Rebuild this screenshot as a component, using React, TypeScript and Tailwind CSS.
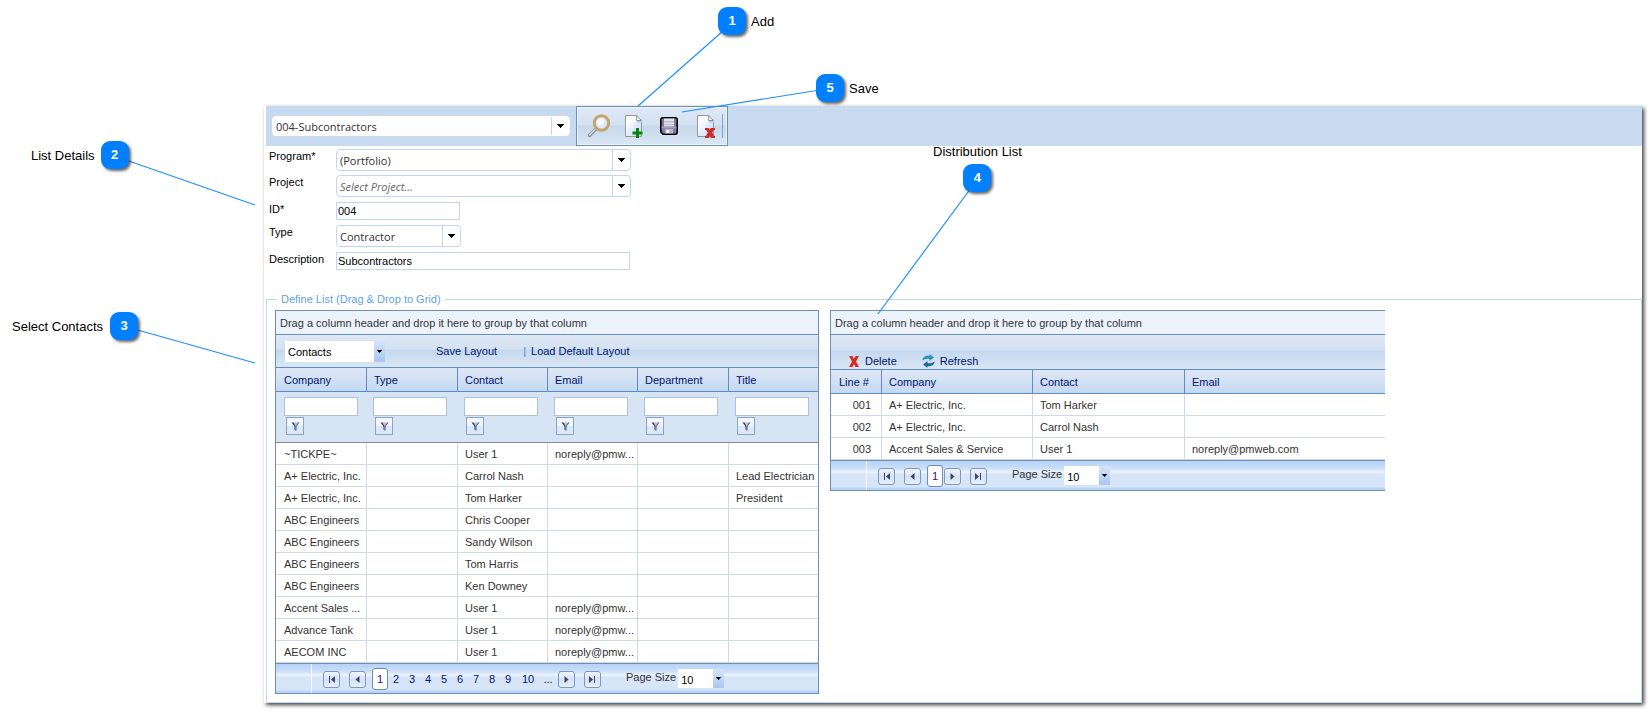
import { useState, type ReactNode } from 'react'

// A contact row in the left grid
interface Contact {
  company: string;
  contact: string;
  email?: string;
  title?: string;
}

interface ListLine {
  line: string;
  company: string;
  contact: string;
  email?: string;
}

interface Callout {
  no: number;
  label: string;
  place: string;
  line: [number, number, number, number];
}

const contacts: Contact[] = [
  { company: '~TICKPE~', contact: 'User 1', email: 'noreply@pmw...' },
  { company: 'A+ Electric, Inc.', contact: 'Carrol Nash', title: 'Lead Electrician' },
  { company: 'A+ Electric, Inc.', contact: 'Tom Harker', title: 'President' },
  { company: 'ABC Engineers', contact: 'Chris Cooper' },
  { company: 'ABC Engineers', contact: 'Sandy Wilson' },
  { company: 'ABC Engineers', contact: 'Tom Harris' },
  { company: 'ABC Engineers', contact: 'Ken Downey' },
  { company: 'Accent Sales ...', contact: 'User 1', email: 'noreply@pmw...' },
  { company: 'Advance Tank', contact: 'User 1', email: 'noreply@pmw...' },
  { company: 'AECOM INC', contact: 'User 1', email: 'noreply@pmw...' },
]

const listLines: ListLine[] = [
  { line: '001', company: 'A+ Electric, Inc.', contact: 'Tom Harker' },
  { line: '002', company: 'A+ Electric, Inc.', contact: 'Carrol Nash' },
  { line: '003', company: 'Accent Sales & Service', contact: 'User 1', email: 'noreply@pmweb.com' },
]

const callouts: Callout[] = [
  { no: 1, label: 'Add', place: 'left-[718px] top-[7px] flex-row gap-[5px]', line: [723, 31, 638, 106] },
  { no: 5, label: 'Save', place: 'left-[816px] top-[74px] flex-row gap-[5px]', line: [820, 90, 682, 112] },
  { no: 2, label: 'List Details', place: 'left-[31px] top-[141px] flex-row-reverse gap-1.5', line: [126, 160, 255, 205] },
  { no: 3, label: 'Select Contacts', place: 'left-[12px] top-[312px] flex-row-reverse gap-[7px]', line: [134, 329, 255, 363] },
  { no: 4, label: 'Distribution List', place: 'left-[933px] top-[144px] flex-col-reverse gap-[5px]', line: [971, 188, 878, 314] },
]

const columns = ['Company', 'Type', 'Contact', 'Email', 'Department', 'Title']

const barGradient = 'bg-[linear-gradient(#dfe8f5_0%,#d3e1f1_45%,#c3d8ef_46%,#dae6f4_100%)]'
const headGradient = 'bg-linear-to-b from-[#dfe8f5] to-[#c3d8f1]'
const pagerGradient =
  'bg-[linear-gradient(#b8d3f6_0%,#c9def8_25%,#edf4fd_38%,#d7e5f8_46%,#d7e5f8_90%,#b8d3f6_94%)]'
const headCell = 'h-6 pl-[7px] first:pl-2 text-left font-normal text-[#00156e] border-b border-[#5d8cc9]'
const cell = 'h-[22px] pl-[7px] first:pl-2 whitespace-nowrap border-b border-[#d0d7e5]'

const Caret = () => (
  <svg width="7" height="4" viewBox="0 0 7 4" shapeRendering="crispEdges" aria-hidden="true">
    <path d="M0 0h7v1H6v1H5v1H4v1H3V3H2V2H1V1H0z" fill="#000" />
  </svg>
)

// Rounded combo box with a separate arrow cell
const Combo = ({ id, label, options, className, italic }: {
  id: string; label?: string; options: string[]; className: string; italic?: boolean
}) => (
  <div className={`relative rounded-sm border bg-white ${className}`}>
    <select
      id={id}
      aria-label={label}
      className={`block h-full w-full appearance-none pl-[3px] pr-5 pt-0.5 font-['Open_Sans',sans-serif] text-[11px] outline-none ${italic ? 'italic text-[#666]' : 'text-[#333]'}`}
    >
      {options.map(o => <option key={o}>{o}</option>)}
    </select>
    <span className="pointer-events-none absolute inset-y-0 right-0 flex w-[18px] items-center justify-center border-l border-[#bfd6f6] pr-px">
      <Caret />
    </span>
  </div>
)

// Square drop-down used in the grid bars
const MiniSelect = ({ id, label, options, className }: {
  id: string; label?: string; options: string[]; className: string
}) => (
  <div className={`relative bg-white ${className}`}>
    <select id={id} aria-label={label} className="block h-full w-full appearance-none pl-[3px] pt-0.5 text-[11px] text-black outline-none">
      {options.map(o => <option key={o}>{o}</option>)}
    </select>
    <span className="pointer-events-none absolute inset-y-0 right-0 flex w-[11px] items-center justify-center bg-linear-to-b from-[#d3e4fb] to-[#a9c7f1]">
      <svg width="5" height="3" viewBox="0 0 5 3" shapeRendering="crispEdges" aria-hidden="true">
        <path d="M0 0h5v1H4v1H3v1H2V2H1V1H0z" fill="#000" />
      </svg>
    </span>
  </div>
)

const Page = ({ children }: { children: ReactNode }) => (
  <svg width="20" height="24" viewBox="0 0 20 24" aria-hidden="true">
    <defs>
      <linearGradient id="sheet" x1="0" y1="0" x2="1" y2="1">
        <stop offset="0.2" stopColor="#fff" />
        <stop offset="1" stopColor="#bcd3fa" />
      </linearGradient>
    </defs>
    <path d="M1.500 1.500h11l5 5v16h-16z" fill="url(#sheet)" stroke="#989898" />
    <path d="M13 5.500h5v3h-5z" fill="#a9c6f5" />
    <path d="M12.500 1.500v5h5z" fill="#fffdf0" stroke="#989898" />
    {children}
  </svg>
)

const SearchIcon = () => (
  <svg width="24" height="24" viewBox="0 0 24 24" aria-hidden="true">
    <path d="M2.500 21.500l7-7" stroke="#8b93a0" strokeWidth="3.500" strokeLinecap="round" />
    <path d="M2.500 21l6.500-6.500" stroke="#d5dae2" strokeWidth="1.500" strokeLinecap="round" />
    <circle cx="14.500" cy="9" r="7.200" fill="#dde8fc" stroke="#c6a56c" strokeWidth="3" />
    <circle cx="13.500" cy="7.500" r="3.500" fill="#f7faff" />
  </svg>
)

const SaveIcon = () => (
  <svg width="20" height="20" viewBox="0 0 20 20" aria-hidden="true">
    <path d="M3 1.800h14L18.200 3v14L17 18.200H4L1.800 16V3z" fill="#8478a8" stroke="#000" strokeWidth="1.600" />
    <path d="M5 2.500h10v8H5z" fill="#dfe5ea" />
    <path d="M5 5h10v1.500H5zM5 8h10v1H5z" fill="#b3c0c6" />
    <path d="M2.600 10.500h14.800v2H2.600z" fill="#a79cc4" />
    <path d="M6 13h8v4.500H6z" fill="#b9b9bd" />
    <path d="M7.500 14h2.500v3H7.500z" fill="#fff" />
  </svg>
)

const FunnelIcon = () => (
  <svg width="9" height="9" viewBox="0 0 9 9" aria-hidden="true">
    <path d="M0.500 0.500h8L5.500 4.500v4L3.500 7.500v-3z" fill="#b4c0da" />
    <path d="M0.500 0.500h2L4.500 4v4.500L3.500 7.500v-3z" fill="#3b4a78" />
    <path d="M8.500 0.500L5.500 4.500v4h-1V4.500l2.700-4z" fill="#5b6a96" />
  </svg>
)

const DeleteIcon = () => (
  <svg width="10" height="11" viewBox="0 0 10 11" aria-hidden="true">
    <path d="M0 0h3.500L5 3 6.500 0H10L7 5.500 10 11H6.500L5 8l-1.500 3H0l3-5.500z" fill="#da2a1c" />
  </svg>
)

const RefreshIcon = () => (
  <svg width="13" height="14" viewBox="0 0 13 14" aria-hidden="true">
    <path d="M0.500 6.500C0.500 3 4 1.200 7.500 2V0l4.500 3.500L7.500 7V5C5 4.200 2.500 5 0.500 6.500z" fill="#2f8fbc" />
    <path d="M12.500 7.500C12.500 11 9 12.800 5.500 12v2L1 10.500 5.500 7v2C8 9.800 10.500 9 12.500 7.500z" fill="#1f6a95" />
  </svg>
)

const arrows = {
  first: 'M2 1h1v7H2zM8 1v7L4 4.500z',
  prev: 'M6.500 1v7L2.500 4.500z',
  next: 'M2.500 1v7l4-3.500z',
  last: 'M1 1v7l4-3.500zM6 1h1v7H6z',
}

const PagerButton = ({ kind }: { kind: keyof typeof arrows }) => (
  <button
    aria-label={`${kind} page`}
    className="flex size-[17px] items-center justify-center rounded-[3px] border border-[#7f97bb] bg-linear-to-b from-[#f0f5fc] via-[#d5e2f4] to-[#e6f0fb]"
  >
    <svg width="9" height="9" viewBox="0 0 9 9" aria-hidden="true">
      <path d={arrows[kind]} fill="#38466f" />
    </svg>
  </button>
)

// Pager component
const Pager = ({ id, pages, more }: { id: string; pages: number[]; more?: boolean }) => {
  const [page, setPage] = useState(1)
  return (
    <div className={`flex h-[31px] items-center border-y border-[#6a8fb8] ${pagerGradient}`}>
      <div className="mr-[11px] h-full w-9 border-r border-[#f4f8fe]" />
      <div className="flex items-center gap-[9px] pt-0.5">
        <PagerButton kind="first" />
        <PagerButton kind="prev" />
      </div>
      <div className="ml-1.5 flex items-center text-[#00156e]">
        {pages.map(n => (
          <button
            key={n}
            onClick={() => setPage(n)}
            className={`h-[22px] ${n === page ? 'w-4 rounded-[3px] border border-[#6d8cb8] bg-white text-[#3c0c80]' : n > 9 ? 'w-6' : 'w-4'}`}
          >
            {n}
          </button>
        ))}
        {more && <button className="ml-0.5 mr-[3px] h-[22px] w-3">...</button>}
      </div>
      <div className="ml-px flex items-center gap-[9px] pt-0.5">
        <PagerButton kind="next" />
        <PagerButton kind="last" />
      </div>
      <label htmlFor={id} className="ml-[25px] pb-1 text-[#333]">Page Size</label>
      <MiniSelect id={id} options={['10', '20', '50']} className="ml-0.5 h-[19px] w-[46px]" />
    </div>
  )
}

const GroupPanel = () => (
  <div className="flex h-6 items-center border-b border-[#6a8fb8] bg-[#ecf3fd] px-1 text-[#333]">
    Drag a column header and drop it here to group by that column
  </div>
)

const ContactsGrid = () => (
  <div className="w-[544px] border-x border-t border-[#6a8fb8]">
    <GroupPanel />
    <div className={`flex h-[33px] items-center border-b border-[#5d8cc9] pl-[9px] text-[#00156e] ${barGradient}`}>
      <MiniSelect id="source" label="Source" options={['Contacts', 'Companies']} className="h-[21px] w-[100px]" />
      <button className="ml-[51px]">Save Layout</button>
      <span className="ml-[26px] mr-[5px] text-[#4d82c4]">|</span>
      <button>Load Default Layout</button>
    </div>
    <table className="w-full table-fixed border-separate border-spacing-0 text-[#333]">
      <colgroup>
        <col className="w-[91px]" />
        <col className="w-[91px]" />
        <col className="w-[90px]" />
        <col className="w-[90px]" />
        <col className="w-[91px]" />
        <col />
      </colgroup>
      <thead>
        <tr className={headGradient}>
          {columns.map(c => (
            <th key={c} className={`${headCell} border-r last:border-r-0`}>{c}</th>
          ))}
        </tr>
        <tr className="bg-[#d6e4f3]">
          {columns.map(c => (
            <td key={c} className="h-[51px] border-b border-[#7f8a99] pl-1.5 pt-[5px] align-top first:pl-2">
              <input aria-label={`Filter ${c}`} className="block h-[19px] w-[74px] border border-[#abc1de] bg-white px-1 outline-none" />
              <button
                aria-label={`${c} filter options`}
                className="ml-0.5 mt-px flex size-[18px] items-center justify-center border border-[#8aa3c8] bg-[linear-gradient(#f3f7fd_50%,#dbe8f8_50%)]"
              >
                <FunnelIcon />
              </button>
            </td>
          ))}
        </tr>
      </thead>
      <tbody>
        {contacts.map((row, i) => (
          <tr key={i}>
            <td className={`${cell} border-r`}>{row.company}</td>
            <td className={`${cell} border-r`} />
            <td className={`${cell} border-r`}>{row.contact}</td>
            <td className={`${cell} border-r`}>{row.email}</td>
            <td className={`${cell} border-r`} />
            <td className={cell}>{row.title}</td>
          </tr>
        ))}
      </tbody>
    </table>
    <Pager id="contacts-size" pages={[1, 2, 3, 4, 5, 6, 7, 8, 9, 10]} more />
  </div>
)

const DistributionGrid = () => (
  <div className="w-[555px] border-l border-t border-[#6a8fb8]">
    <GroupPanel />
    <div className={`flex h-[35px] items-end border-b border-[#5d8cc9] pl-[18px] text-[#00156e] ${barGradient}`}>
      <button className="flex h-4 items-center gap-1.5"><DeleteIcon />Delete</button>
      <button className="ml-[25px] flex h-4 items-center gap-[5px]"><RefreshIcon />Refresh</button>
    </div>
    <table className="w-full table-fixed border-separate border-spacing-0 text-[#333]">
      <colgroup>
        <col className="w-[51px]" />
        <col className="w-[151px]" />
        <col className="w-[152px]" />
        <col />
      </colgroup>
      <thead>
        <tr className={headGradient}>
          <th className={`${headCell} border-r`}>Line #</th>
          <th className={`${headCell} border-r`}>Company</th>
          <th className={`${headCell} border-r`}>Contact</th>
          <th className={headCell}>Email</th>
        </tr>
      </thead>
      <tbody>
        {listLines.map(row => (
          <tr key={row.line}>
            <td className={`${cell} border-r pr-2.5 text-right`}>{row.line}</td>
            <td className={`${cell} border-r`}>{row.company}</td>
            <td className={`${cell} border-r`}>{row.contact}</td>
            <td className={cell}>{row.email}</td>
          </tr>
        ))}
      </tbody>
    </table>
    <Pager id="list-size" pages={[1]} />
  </div>
)

const Field = ({ id, label, className, children }: {
  id: string; label: string; className: string; children: ReactNode
}) => (
  <div className={`flex items-start ${className}`}>
    <label htmlFor={id} className="-mt-px h-4 w-[67px] leading-4 text-black">{label}</label>
    {children}
  </div>
)

const textBox = 'h-[18px] border border-[#bfd6f6] bg-white px-px text-[11px] text-black outline-none'

export default function App() {
  return (
    <main className="relative bg-white pb-[9px] pl-[264px] pr-[9px] pt-[106px] font-['Liberation_Sans',Arial,sans-serif] text-[11px] leading-[14px]">
      <section className="bg-white pl-0.5 shadow-[2px_2px_4px_rgba(0,0,0,0.75)]">
        <header className="flex h-10 items-center bg-[#c8daef] bg-[radial-gradient(#bdd2ec_1px,transparent_1px)] bg-[length:4px_3px] bg-repeat-x pl-1.5">
          <Combo id="list" label="List" options={['004-Subcontractors']} className="h-5 w-[298px] border-white" />
          <div className="ml-1.5 flex h-full w-[152px] items-center border border-[#6a8fb8] bg-[linear-gradient(#dfe8f5_0%,#d3e1f1_48%,#c6d8ec_49%,#dae6f4_100%)] pl-2.5 ring-1 ring-inset ring-[#eef4fb]">
            <button aria-label="Search" className="flex w-[37px]"><SearchIcon /></button>
            <button aria-label="Add" className="flex w-[35px]">
              <Page><path d="M12 14h3v3.500h3.500v3H15V24h-3v-3.500H8.500v-3H12z" fill="#0a830a" /></Page>
            </button>
            <button aria-label="Save" className="flex w-[37px]"><SaveIcon /></button>
            <button aria-label="Delete" className="flex">
              <Page><path d="M9 14h4l.8 2 .8-2H19v2h-1l-1.800 2.500L18 22h1v2h-4.400l-.8-2-.8 2H9v-2h1l1.800-3.500L10 16H9z" fill="#cb2d2d" /></Page>
            </button>
            <span className="ml-1.5 h-6 w-px bg-[#7ea6db]" />
          </div>
        </header>

        <form className="pl-[3px] pt-0.5">
          <Field id="program" label="Program*" className="h-[26px] pt-px">
            <Combo id="program" options={['(Portfolio)']} className="h-[22px] w-[295px] border-[#bfd6f6]" />
          </Field>
          <Field id="project" label="Project" className="h-[26px] pt-px">
            <Combo id="project" options={['Select Project...']} className="h-[22px] w-[295px] border-[#bfd6f6]" italic />
          </Field>
          <Field id="list-id" label="ID*" className="h-6 pt-0.5">
            <input id="list-id" defaultValue="004" className={`${textBox} w-[124px]`} />
          </Field>
          <Field id="type" label="Type" className="h-[26px] pt-px">
            <Combo id="type" options={['Contractor']} className="h-[22px] w-[125px] border-[#bfd6f6]" />
          </Field>
          <Field id="description" label="Description" className="h-[26px] pt-0.5">
            <input id="description" defaultValue="Subcontractors" className={`${textBox} w-[294px]`} />
          </Field>
        </form>

        <fieldset className="mt-4 border border-[#bfd6f6] px-2 pb-2 pt-1">
          <legend className="ml-0.5 px-1 text-[#5f9ff0]">Define List (Drag &amp; Drop to Grid)</legend>
          <div className="flex items-start gap-[11px]">
            <ContactsGrid />
            <DistributionGrid />
          </div>
        </fieldset>
      </section>

      <svg className="pointer-events-none absolute inset-0 size-full" aria-hidden="true">
        {callouts.map(({ no, line: [x1, y1, x2, y2] }) => (
          <line key={no} x1={x1} y1={y1} x2={x2} y2={y2} stroke="#1e8fff" strokeWidth="1.200" />
        ))}
      </svg>
      {callouts.map(c => (
        <div key={c.no} className={`absolute flex items-center text-[13px] text-black ${c.place}`}>
          <span className="flex size-7 items-center justify-center rounded-[9px] bg-[#0080ff] font-bold text-white shadow-[2px_2px_3px_rgba(0,0,0,0.6)]">
            {c.no}
          </span>
          <span className="pt-px">{c.label}</span>
        </div>
      ))}
    </main>
  )
}
